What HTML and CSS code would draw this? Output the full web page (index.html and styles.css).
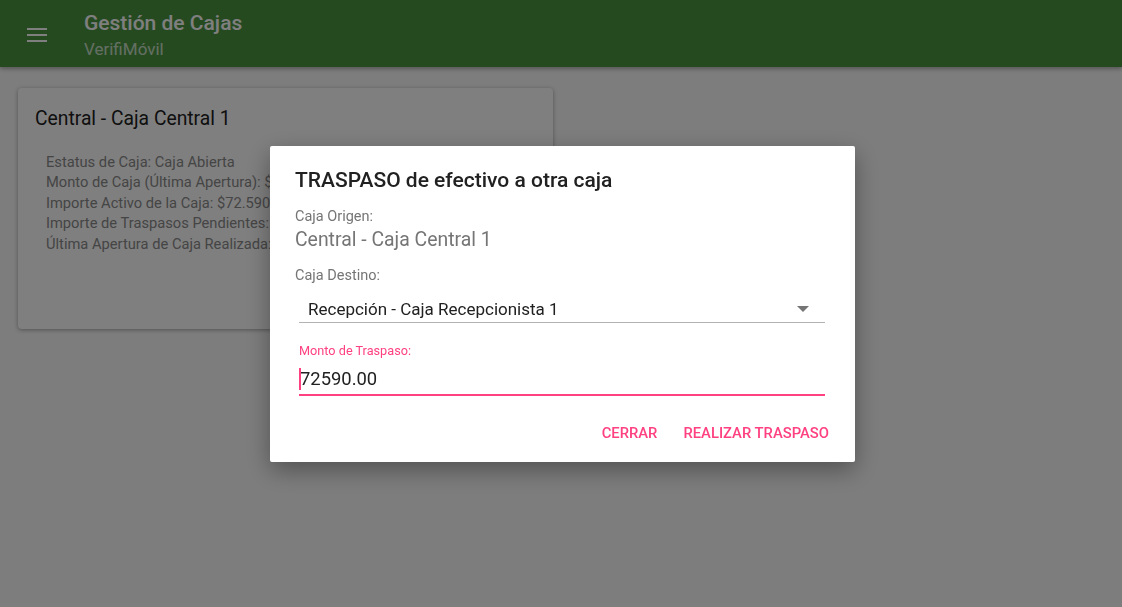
FILE: index.html
```html
<!DOCTYPE html>
<html>
<head>
  <meta charset="UTF-8">
  <title>Gestión de Cajas</title>
  <link rel="stylesheet" href="styles.css">
</head>
<body>
  <header class="toolbar">
    <div class="menu-btn">
      <svg width="20" height="14" viewBox="0 0 20 14"><path d="M0 1h20M0 7h20M0 13h20" stroke="#fff" stroke-width="2"/></svg>
    </div>
    <div class="titles">
      <div class="app-title">Gestión de Cajas</div>
      <div class="app-sub">VerifiMóvil</div>
    </div>
  </header>

  <main class="content">
    <div class="card">
      <h2>Central - Caja Central 1</h2>
      <div class="card-lines">
        <div>Estatus de Caja: Caja Abierta</div>
        <div>Monto de Caja (Última Apertura): $72.590,00</div>
        <div>Importe Activo de la Caja: $72.590,00</div>
        <div>Importe de Traspasos Pendientes: $0,00</div>
        <div>Última Apertura de Caja Realizada: 12/03/2019</div>
      </div>
    </div>
  </main>

  <div class="overlay">
    <div class="dialog">
      <h3>TRASPASO de efectivo a otra caja</h3>
      <div class="field-label">Caja Origen:</div>
      <div class="field-static">Central - Caja Central 1</div>
      <div class="field-label dest">Caja Destino:</div>
      <div class="select">
        <span>Recepción - Caja Recepcionista 1</span>
        <svg width="12" height="6" viewBox="0 0 12 6"><path d="M0 0h12L6 6z" fill="#757575"/></svg>
      </div>
      <div class="input-wrap">
        <label class="float-label">Monto de Traspaso:</label>
        <div class="input"><span class="caret"></span>72590.00</div>
      </div>
      <div class="actions">
        <button>CERRAR</button>
        <button>REALIZAR TRASPASO</button>
      </div>
    </div>
  </div>
</body>
</html>
```

FILE: styles.css
```css
body { margin: 0; font-family: Roboto, "Liberation Sans", sans-serif; background: #fafafa; height: 607px; overflow: hidden; }
.toolbar { height: 67px; background: #4a9441; display: flex; align-items: flex-start; box-shadow: 0 2px 4px rgba(0,0,0,0.3); }
.menu-btn { width: 84px; padding-top: 27px; padding-left: 27px; box-sizing: border-box; }
.titles { padding-top: 10px; color: #fff; }
.app-title { font-size: 21px; font-weight: 500; line-height: 26px; }
.app-sub { font-size: 17px; line-height: 26px; opacity: 0.7; }
.content { padding: 21px 18px; }
.card { width: 535px; height: 241px; box-sizing: border-box; background: #fff; border-radius: 4px; box-shadow: 0 1px 4px rgba(0,0,0,0.35); padding: 17px 17px; }
.card h2 { margin: 0; font-size: 19.3px; font-weight: 400; color: #212121; line-height: 28px; }
.card-lines { margin-top: 19px; padding-left: 11px; font-size: 14.7px; line-height: 20.4px; color: #8a8a8a; white-space: nowrap; overflow: hidden; }
.overlay { position: fixed; inset: 0; background: rgba(0,0,0,0.5); }
.dialog { position: absolute; left: 270px; top: 146px; width: 585px; height: 316px; box-sizing: border-box; background: #fff; border-radius: 2px; box-shadow: 0 8px 24px rgba(0,0,0,0.35); padding: 20px 26px 0 25px; }
.dialog h3 { margin: 0; font-size: 21px; font-weight: 500; color: #212121; line-height: 28px; }
.field-label { margin-top: 13px; font-size: 14.5px; color: #757575; line-height: 20px; }
.field-label.dest { margin-top: 13px; }
.field-static { font-size: 19.4px; color: #757575; line-height: 26px; }
.select { margin: 9px 4px 0 4px; height: 27px; border-bottom: 1px solid #b3b3b3; display: flex; justify-content: space-between; align-items: center; padding: 0 16px 0 9px; font-size: 17px; color: #212121; }
.input-wrap { margin: 20px 4px 0 4px; }
.float-label { display: block; font-size: 12.7px; color: #ff4081; line-height: 16px; }
.input { margin-top: 7px; height: 28px; border-bottom: 2px solid #ff4081; font-size: 18.4px; color: #212121; line-height: 26px; position: relative; padding-left: 1px; }
.caret { position: absolute; left: 0; top: 2px; width: 2px; height: 22px; background: #ff4081; }
.actions { display: flex; justify-content: flex-end; gap: 10px; margin-top: 20px; margin-right: -8px; }
.actions button { border: none; background: none; font-family: inherit; font-size: 14.8px; font-weight: 500; color: #ff4081; padding: 8px 8px; }
```
